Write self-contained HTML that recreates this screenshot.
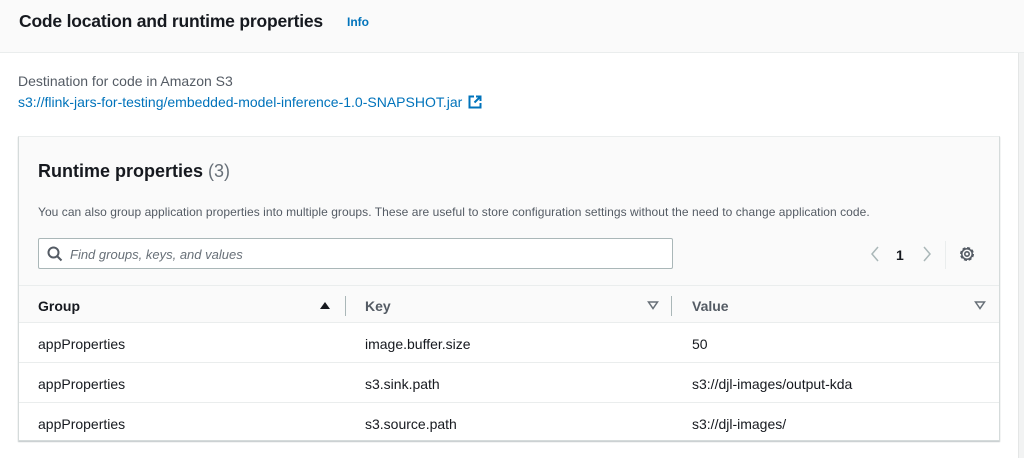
<!DOCTYPE html>
<html><head><style>
*{box-sizing:border-box;margin:0;padding:0}
body{width:1024px;height:458px;overflow:hidden;background:#fff;font-family:"Liberation Sans",sans-serif;color:#16191f;position:relative}
.top{position:absolute;left:0;top:0;width:1024px;height:53px;background:#fafafa;border-bottom:1px solid #eaeded}
.abs{position:absolute;white-space:nowrap}
.box{position:absolute;left:18px;top:136px;width:982px;height:305px;border:1px solid #d5dbdb;border-top:1px solid #eaeded;background:#fafafa;box-shadow:0 1px 1px rgba(0,28,36,.25)}
.row{position:absolute;left:0;width:980px;height:40px;background:#fff;border-top:1px solid #eaeded;font-size:14px}
.row span{position:absolute;top:13px}
.strip{position:absolute;left:1018px;top:53px;width:6px;height:405px;background:#f2f3f3;border-left:1px solid #e4e6e6}
</style></head><body>
<div class="top"></div>
<div class="abs" style="left:19px;top:11px;font-size:17.5px;font-weight:bold;letter-spacing:-0.2px">Code location and runtime properties</div>
<div class="abs" style="left:347px;top:15px;font-size:12px;font-weight:bold;color:#0073bb">Info</div>
<div class="abs" style="left:18px;top:73px;font-size:14px;color:#545b64">Destination for code in Amazon S3</div>
<div class="abs" style="left:18px;top:94px;font-size:14px;color:#0073bb">s3://flink-jars-for-testing/embedded-model-inference-1.0-SNAPSHOT.jar
<svg width="14" height="14" viewBox="0 0 14 14" style="vertical-align:-2px;margin-left:2px"><path d="M6 1.5H1.5v11h11V8M8 1.5h4.5V6M12.5 1.5L6.5 7.5" fill="none" stroke="#0073bb" stroke-width="2"/></svg></div>
<div class="strip"></div>
<div class="box">
<div class="abs" style="left:19px;top:24px;font-size:18px;font-weight:bold">Runtime properties <span style="font-weight:normal;color:#687078">(3)</span></div>
<div class="abs" style="left:19px;top:68px;font-size:12px;letter-spacing:0.05px;color:#545b64">You can also group application properties into multiple groups. These are useful to store configuration settings without the need to change application code.</div>
<div class="abs" style="left:19px;top:101px;width:635px;height:31px;border:1px solid #aab7b8;border-radius:2px;background:#fff">
<svg width="16" height="16" viewBox="0 0 16 16" style="position:absolute;left:8px;top:7px"><circle cx="6.5" cy="6.5" r="5" fill="none" stroke="#545b64" stroke-width="2"/><path d="M10 10l4.5 4.5" stroke="#545b64" stroke-width="2"/></svg>
<span class="abs" style="left:31px;top:8px;font-size:13px;font-style:italic;color:#687078">Find groups, keys, and values</span></div>
<svg class="abs" style="left:850px;top:108px" width="12" height="18" viewBox="0 0 12 18"><path d="M9 2L3 9l6 7" fill="none" stroke="#aab7b8" stroke-width="1.5"/></svg>
<div class="abs" style="left:877px;top:110px;font-size:14px;font-weight:bold">1</div>
<svg class="abs" style="left:902px;top:108px" width="12" height="18" viewBox="0 0 12 18"><path d="M3 2l6 7-6 7" fill="none" stroke="#aab7b8" stroke-width="1.5"/></svg>
<div class="abs" style="left:926px;top:104px;width:1px;height:28px;background:#eaeded"></div>
<svg class="abs" style="left:939px;top:108px" width="18" height="18" viewBox="0 0 18 18"><circle cx="9" cy="9" r="6" fill="none" stroke="#545b64" stroke-width="2" stroke-dasharray="3 1.7"/><circle cx="9" cy="9" r="5.2" fill="none" stroke="#545b64" stroke-width="1.5"/><circle cx="9" cy="9" r="2.2" fill="none" stroke="#545b64" stroke-width="1.6"/></svg>
<div class="abs" style="left:0;top:148px;width:980px;height:1px;background:#eaeded"></div>
<div class="abs" style="left:19px;top:161px;font-size:14px;font-weight:bold">Group</div>
<svg class="abs" style="left:300px;top:163px" width="12" height="10"><path d="M1 9h10L6 2z" fill="#16191f"/></svg>
<div class="abs" style="left:326px;top:159px;width:1px;height:20px;background:#aab7b8"></div>
<div class="abs" style="left:346px;top:161px;font-size:14px;font-weight:bold;color:#545b64">Key</div>
<svg class="abs" style="left:628px;top:163px" width="12" height="10"><path d="M1.5 2h9L6 8.5z" fill="none" stroke="#687078" stroke-width="1.5"/></svg>
<div class="abs" style="left:652px;top:159px;width:1px;height:20px;background:#aab7b8"></div>
<div class="abs" style="left:673px;top:161px;font-size:14px;font-weight:bold;color:#545b64">Value</div>
<svg class="abs" style="left:955px;top:163px" width="12" height="10"><path d="M1.5 2h9L6 8.5z" fill="none" stroke="#687078" stroke-width="1.5"/></svg>
<div class="row" style="top:185px"><span style="left:19px">appProperties</span><span style="left:346px">image.buffer.size</span><span style="left:673px">50</span></div>
<div class="row" style="top:225px"><span style="left:19px">appProperties</span><span style="left:346px">s3.sink.path</span><span style="left:673px">s3://djl-images/output-kda</span></div>
<div class="row" style="top:265px;height:38px"><span style="left:19px">appProperties</span><span style="left:346px">s3.source.path</span><span style="left:673px">s3://djl-images/</span></div>
</div>
</body></html>
